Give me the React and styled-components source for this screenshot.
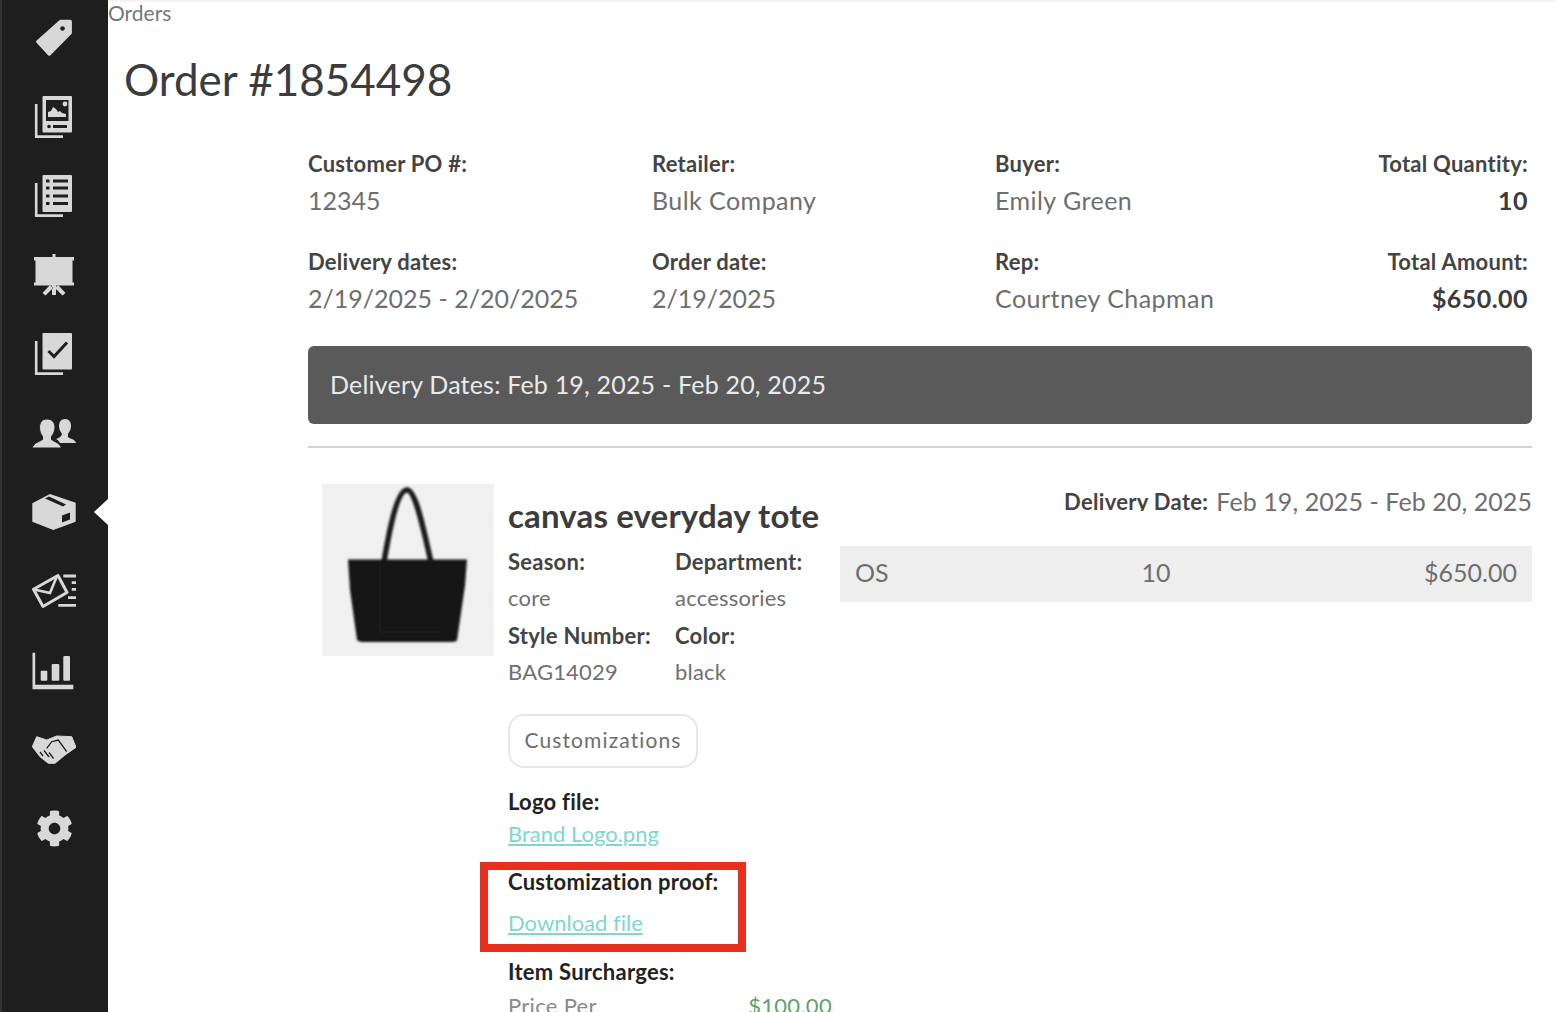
import React from "react";
import styled, { createGlobalStyle } from "styled-components";
import { FaCog } from "react-icons/fa";

const Global = createGlobalStyle`
  html, body { margin: 0; padding: 0; background: #fff; }
  body { font-family: Lato, "Open Sans", sans-serif; font-variant-ligatures: none; overflow: hidden; height: 1012px; }
  * { box-sizing: border-box; }
`;

const Page = styled.div`display: flex; height: 1012px; overflow: hidden;`;
const Sidebar = styled.nav`
  flex: 0 0 108px; height: 1012px; padding-top: 16px;
  background: #1e1e1e; border-left: 2px solid #333;
  display: flex; flex-direction: column; align-items: center;
`;
const NavItem = styled.a`
  position: relative; flex: 0 0 79.05px; width: 100%; margin-left: -2px;
  display: flex; justify-content: center; align-items: flex-start; color: #d8d8d8;
  > svg { width: ${p => p.$size || 44}px; height: ${p => p.$size || 44}px; margin-top: ${p => (44 - (p.$size || 44)) / 2}px; display: block; }
  ${p => p.$active && `
    &::after {
      content: ""; position: absolute; right: -2px; top: 8px; width: 0; height: 0;
      border-top: 14px solid transparent; border-bottom: 14px solid transparent;
      border-right: 15px solid #fff;
    }
  `}
`;
const Main = styled.main`flex: 1; min-width: 0; box-shadow: inset 0 3px 3px -2px #eaeaea;`;
const Breadcrumb = styled.div`font-size: 21px; line-height: 24px; color: #777; margin-top: 1px;`;
const Title = styled.h1`
  margin: 0 0 0 16px; height: 123px; padding-top: 26px;
  font-size: 44px; line-height: 56px; font-weight: 400; color: #3c3c3c;
`;
const Content = styled.div`margin: 0 24px 0 200px;`;
const InfoGrid = styled.div`
  display: grid; grid-template-columns: 344px 343px 1fr auto; row-gap: 25px; padding-right: 4px;
`;
const Info = styled.div`text-align: ${p => (p.$right ? "right" : "left")};`;
const InfoLabel = styled.div`font-size: 22px; letter-spacing: 0.25px; line-height: 32px; font-weight: 700; color: #444;`;
const InfoValue = styled.div`
  margin-top: -1px; font-size: 25px; line-height: 42px; letter-spacing: ${p => (p.$tight ? 0 : 0.45)}px;
  color: ${p => (p.$strong ? "#3c3c3c" : "#6e6e6e")};
  font-weight: ${p => (p.$strong ? 700 : 400)};
`;
const Band = styled.div`
  margin-top: 27px; height: 78px; padding: 0 22px 2px; display: flex; align-items: center;
  background: #5a5a5a; border-radius: 6px; color: #eaeaea; font-size: 25px; letter-spacing: 0.2px;
`;
const Rule = styled.hr`margin: 22px 0 36px; border: 0; border-top: 2px solid #d4d4d4;`;
const Product = styled.section`display: flex; padding-left: 14px;`;
const Thumb = styled.svg`flex: 0 0 172px; width: 172px; height: 172px;`;
const Details = styled.div`flex: 0 0 332px; margin-left: 14px;`;
const ProductName = styled.h2`
  margin: 10px 0 8px; font-size: 33px; letter-spacing: 0.15px; line-height: 42px; font-weight: 700; color: #3c3c3c;
`;
const Meta = styled.div`display: grid; grid-template-columns: 167px 1fr; row-gap: 2px;`;
const MetaLabel = styled.div`font-size: 22px; letter-spacing: 0.25px; line-height: 36px; font-weight: 700; color: #444;`;
const MetaValue = styled.div`font-size: 22px; letter-spacing: 0.2px; line-height: 36px; color: #707070;`;
const PillButton = styled.button`
  display: block; margin-top: 24px; width: 190px; height: 54px; padding: 0 0 3px;
  background: #fff; border: 2px solid #e6e6e6; border-radius: 16px;
  font-family: Lato, sans-serif; font-size: 21px; letter-spacing: 1.1px; color: #6e6e6e;
`;
const FileLabel = styled.div`font-size: 22px; letter-spacing: 0.25px; line-height: 32px; font-weight: 700; color: #222; margin-top: ${p => p.$top || 0}px;`;
const FileLink = styled.a`font-size: 22px; line-height: 32px; color: #7fd6cf; text-decoration: underline; display: block;`;
const ProofBox = styled.div`
  margin: 12px 0 0 -28px; width: 266px; height: 90px; padding: 0 0 0 20px;
  border: 8px solid #e8301f;
`;
const ProofLabel = styled.div`font-size: 22px; letter-spacing: 0.25px; line-height: 24px; font-weight: 700; color: #222;`;
const ProofLink = styled(FileLink)`margin-top: 13px;`;
const Surcharge = styled.div`
  display: flex; justify-content: space-between; width: 324px; margin-top: 1px;
  font-size: 22px; letter-spacing: 0.3px; line-height: 34px; color: #8a8a8a;
`;
const Money = styled.span`color: #5aa36f;`;
const Lines = styled.div`flex: 1; min-width: 0;`;
const DeliveryRow = styled.div`
  height: 33px; margin-bottom: 29px; display: flex; justify-content: flex-end; align-items: center; gap: 8px;
`;
const DeliveryLabel = styled.span`
  display: block; height: 20px; line-height: 22px; overflow: hidden;
  font-size: 22px; letter-spacing: 0.3px; font-weight: 700; color: #444;
`;
const DeliveryValue = styled.span`font-size: 25px; letter-spacing: 0.08px; color: #6e6e6e;`;
const LineRow = styled.div`
  display: grid; grid-template-columns: 270px 62px 1fr; align-items: center;
  height: 56px; padding: 0 15px 4px; background: #eee; font-size: 25px; color: #6e6e6e;
`;
const Qty = styled.span`text-align: center;`;
const Amount = styled.span`text-align: right;`;

const Tag = () => (
  <svg viewBox="0 0 44 44"><path d="M28.500 5.500h9.700v11.200L17.300 38 5.800 25.700z" fill="currentColor" stroke="currentColor" strokeWidth="3.400" strokeLinejoin="round"/><circle cx="30.500" cy="12.500" r="2.300" fill="#1e1e1e"/></svg>
);
const BackL = () => <path d="M4.200 9v32.600H31" fill="none" stroke="currentColor" strokeWidth="2.600"/>;
const Catalog = () => (
  <svg viewBox="0 0 44 44">
    <BackL/>
    <rect x="10.500" y="1" width="29.500" height="36.500" rx="1" fill="currentColor"/>
    <rect x="14" y="5" width="22.500" height="21" fill="#1e1e1e"/>
    <path d="M16 22v-5l3-1 2-4 3 2 2 3 2-1 2 2 4 1v3z" fill="currentColor"/>
    <circle cx="33" cy="9" r="2.400" fill="currentColor"/>
    <circle cx="17" cy="31.500" r="1.800" fill="#1e1e1e"/>
    <rect x="21" y="30" width="14" height="3" fill="#1e1e1e"/>
  </svg>
);
const Lists = () => (
  <svg viewBox="0 0 44 44">
    <BackL/>
    <rect x="10.500" y="1" width="29.500" height="37" rx="1" fill="currentColor"/>
    {[7, 14, 22, 29.500].map(y => (
      <g key={y} fill="#1e1e1e">
        <rect x="14" y={y - 1.500} width="3.500" height="3"/>
        <rect x="21" y={y - 1.500} width="15" height="3"/>
      </g>
    ))}
  </svg>
);
const Board = () => (
  <svg viewBox="0 0 44 44" fill="currentColor">
    <rect x="20.500" y="1" width="3" height="4"/>
    <rect x="2" y="4" width="40" height="3.500"/>
    <rect x="3.500" y="6" width="37" height="26"/>
    <rect x="2" y="29.500" width="40" height="3"/>
    <path d="M20 32h4v10h-4zM18 32l-7.500 8 3 2.500L21 35zM26 32l7.500 8-3 2.500L23 35z"/>
  </svg>
);
const Checks = () => (
  <svg viewBox="0 0 44 44">
    <BackL/>
    <rect x="10.500" y="1" width="29.500" height="36.500" rx="1" fill="currentColor"/>
    <path d="M16.500 19l5.500 5.500L35 10.500" fill="none" stroke="#1e1e1e" strokeWidth="3"/>
  </svg>
);
const Users = () => (
  <svg viewBox="0 0 44 44" fill="currentColor">
    <path d="M33 8c4 0 6 3 6 7 0 4-2 6-3 8v3c2 2 7 2 8 6H28c-1-2-2-3-4-4 3-1 5-2 6-5-1-2-3-4-3-8 0-4 2-7 6-7z"/>
    <path d="M15 8c5 0 8 3.500 8 8.500 0 4-2 7-3.500 9v3c3 2.500 8 3 10 8.500H0c2-5.500 7-6 10.500-8.500v-3C9 23.500 7.500 20.500 7.500 16.500 7.500 11.500 10 8 15 8z" stroke="#1e1e1e" strokeWidth="1"/>
  </svg>
);
const Box = () => (
  <svg viewBox="0 0 44 44">
    <path d="M18 4l25.700 8.700v19L21.300 40 .3 31.700V13.300z" fill="currentColor"/>
    <path d="M17 6.500l17 8-3 2L13 8.500z" fill="#1e1e1e"/>
    <path d="M30 25.500l8-3v7l-8 3z" fill="#1e1e1e"/>
  </svg>
);
const Mail = () => (
  <svg viewBox="0 0 44 44">
    <path d="M1.500 20.300L26 6.500l9 17-24 14z" fill="none" stroke="currentColor" strokeWidth="3" strokeLinejoin="round"/>
    <path d="M2 20.500l16 3.500 7-17" fill="none" stroke="currentColor" strokeWidth="2.600"/>
    <path d="M31.300 7H44M39.700 13.700H44M39.700 20.300H44M36 28.700H44M26.300 36.300H44" stroke="currentColor" strokeWidth="2.800" fill="none"/>
  </svg>
);
const Chart = () => (
  <svg viewBox="0 0 44 44" fill="currentColor">
    <path d="M.5 4.700h2.700v32h38.100v4.600H.5z"/>
    <rect x="8.700" y="22.700" width="6.600" height="10" rx="1"/>
    <rect x="19.700" y="16" width="7.600" height="16.700" rx="1"/>
    <rect x="31.300" y="8" width="6.700" height="24.700" rx="1"/>
  </svg>
);
const Shake = () => (
  <svg viewBox="0 0 44 44">
    <path d="M.3 19.700L4.700 9.700 14.700 13l10-4 15 .7L44 20.300 33 28 23 36.300h-6.700L8 29.700z" fill="currentColor" strokeLinejoin="round" stroke="currentColor"/>
    <path d="M14.700 21.300l5-6.600 6.600-1.700 8.400 11.700M8 25l3 4M12 23.500l5 6.500M17 25.500l4.500 6" fill="none" stroke="#1e1e1e" strokeWidth="1.300"/>
  </svg>
);

const navItems = [Tag, Catalog, Lists, Board, Checks, Users, Box, Mail, Chart, Shake];

const Bag = () => (
  <Thumb viewBox="0 0 172 172" role="img" aria-label="canvas everyday tote">
    <defs><filter id="soft"><feGaussianBlur stdDeviation="0.8"/></filter></defs>
    <rect width="172" height="172" fill="#f0f0f0"/>
    <g filter="url(#soft)">
      <path d="M62 78C67 48 75 6 85 6c9 0 17 42 24 72" fill="none" stroke="#1c1c1c" strokeWidth="5.500"/>
      <path d="M26 75.500h119l-2 26-8 55q-2 1.500-6 1.500H42q-5 0-7-2l-7-50z" fill="#161616"/>
      <path d="M58 78v70h62" fill="none" stroke="#222" strokeWidth="1"/>
    </g>
  </Thumb>
);

export default function App() {
  return (
    <Page>
      <Global/>
      <Sidebar>
        {navItems.map((Icon, i) => (
          <NavItem key={i} $active={i === 6}><Icon/></NavItem>
        ))}
        <NavItem $size={37}><FaCog/></NavItem>
      </Sidebar>
      <Main>
        <Breadcrumb>Orders</Breadcrumb>
        <Title>Order #1854498</Title>
        <Content>
          <InfoGrid>
            <Info><InfoLabel>Customer PO #:</InfoLabel><InfoValue $tight>12345</InfoValue></Info>
            <Info><InfoLabel>Retailer:</InfoLabel><InfoValue>Bulk Company</InfoValue></Info>
            <Info><InfoLabel>Buyer:</InfoLabel><InfoValue>Emily Green</InfoValue></Info>
            <Info $right><InfoLabel>Total Quantity:</InfoLabel><InfoValue $strong>10</InfoValue></Info>
            <Info><InfoLabel>Delivery dates:</InfoLabel><InfoValue $tight>2/19/2025 - 2/20/2025</InfoValue></Info>
            <Info><InfoLabel>Order date:</InfoLabel><InfoValue $tight>2/19/2025</InfoValue></Info>
            <Info><InfoLabel>Rep:</InfoLabel><InfoValue>Courtney Chapman</InfoValue></Info>
            <Info $right><InfoLabel>Total Amount:</InfoLabel><InfoValue $strong>$650.00</InfoValue></Info>
          </InfoGrid>
          <Band>Delivery Dates: Feb 19, 2025 - Feb 20, 2025</Band>
          <Rule/>
          <Product>
            <Bag/>
            <Details>
              <ProductName>canvas everyday tote</ProductName>
              <Meta>
                <div><MetaLabel>Season:</MetaLabel><MetaValue>core</MetaValue></div>
                <div><MetaLabel>Department:</MetaLabel><MetaValue>accessories</MetaValue></div>
                <div><MetaLabel>Style Number:</MetaLabel><MetaValue>BAG14029</MetaValue></div>
                <div><MetaLabel>Color:</MetaLabel><MetaValue>black</MetaValue></div>
              </Meta>
              <PillButton>Customizations</PillButton>
              <FileLabel $top={18}>Logo file:</FileLabel>
              <FileLink href="#">Brand Logo.png</FileLink>
              <ProofBox>
                <ProofLabel>Customization proof:</ProofLabel>
                <ProofLink href="#">Download file</ProofLink>
              </ProofBox>
              <FileLabel $top={4}>Item Surcharges:</FileLabel>
              <Surcharge><span>Price Per</span><Money>$100.00</Money></Surcharge>
            </Details>
            <Lines>
              <DeliveryRow>
                <DeliveryLabel>Delivery Date:</DeliveryLabel>
                <DeliveryValue>Feb 19, 2025 - Feb 20, 2025</DeliveryValue>
              </DeliveryRow>
              <LineRow><span>OS</span><Qty>10</Qty><Amount>$650.00</Amount></LineRow>
            </Lines>
          </Product>
        </Content>
      </Main>
    </Page>
  );
}
